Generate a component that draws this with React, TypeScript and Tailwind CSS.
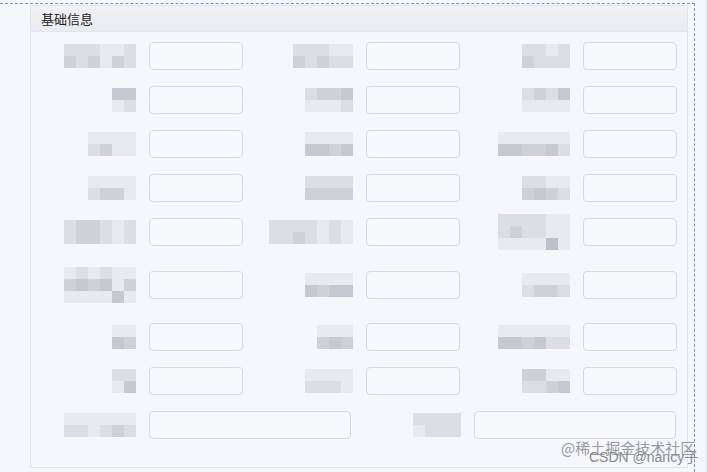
import React from "react";

// blurred label placeholders: each cell is a 12px mosaic tile
const shades = ["#e8eaf0", "#dcdee5", "#cfd1d9", "#c6c9d2", "#bcbfca", "#e4e6ec"];

type Label = { top: number[]; bottom: number[]; extra?: number[] };

function Tiles({ cells }: { cells: number[] }) {
  return (
    <div className="flex">
      {cells.map((s, i) => (
        <div key={i} className="h-[12px] w-[12px]" style={{ background: shades[s] }} />
      ))}
    </div>
  );
}

function Mosaic({ label }: { label: Label }) {
  return (
    <div className="flex flex-col items-end blur-[0.6px]">
      <Tiles cells={label.top} />
      <Tiles cells={label.bottom} />
      {label.extra && <Tiles cells={label.extra} />}
    </div>
  );
}

const L = (top: number[], bottom: number[], extra?: number[]): Label => ({ top, bottom, extra });

type Field = { label: Label; wide?: boolean };

const rows: { h: number; fields: Field[] }[] = [
  { h: 28, fields: [{ label: L([1, 1, 1, 0, 0, 1], [2, 1, 2, 0, 2, 1]) }, { label: L([1, 1, 1, 0, 0], [2, 1, 2, 1, 1]) }, { label: L([1, 1, 0, 1], [2, 1, 1, 1]) }] },
  { h: 28, fields: [{ label: L([3, 3], [0, 1]) }, { label: L([1, 2, 2, 3], [0, 0, 0, 1]) }, { label: L([1, 2, 1, 3], [0, 0, 0, 0]) }] },
  { h: 28, fields: [{ label: L([0, 0, 0, 0], [1, 2, 0, 0]) }, { label: L([0, 0, 0, 0], [3, 3, 2, 3]) }, { label: L([0, 0, 0, 0, 0, 0], [3, 3, 2, 2, 3, 1]) }] },
  { h: 28, fields: [{ label: L([0, 0, 0, 0], [1, 2, 2, 0]) }, { label: L([1, 1, 1, 1], [2, 2, 2, 2]) }, { label: L([1, 1, 0, 0], [2, 3, 2, 1]) }] },
  { h: 28, fields: [{ label: L([1, 2, 2, 1, 0, 1], [1, 2, 2, 1, 0, 1]) }, { label: L([1, 1, 1, 1, 0, 1, 0], [1, 1, 2, 1, 0, 1, 0]) }, { label: L([1, 1, 1, 1, 0, 0], [1, 2, 1, 1, 0, 0], [0, 0, 0, 0, 4, 0]) }] },
  { h: 45, fields: [{ label: L([0, 1, 0, 1, 0, 0], [2, 3, 2, 3, 0, 2], [0, 0, 0, 0, 3, 0]) }, { label: L([0, 0, 0, 0], [3, 2, 3, 3]) }, { label: L([0, 0, 0, 0], [1, 2, 2, 1]) }] },
  { h: 28, fields: [{ label: L([0, 0], [3, 2]) }, { label: L([0, 0, 0], [2, 3, 2]) }, { label: L([0, 0, 0, 0, 0, 0], [3, 3, 2, 3, 1, 1]) }] },
  { h: 28, fields: [{ label: L([1, 1], [0, 3]) }, { label: L([0, 0, 0, 0], [1, 1, 1, 0]) }, { label: L([2, 2, 0, 0], [1, 1, 2, 3]) }] },
  { h: 28, fields: [{ label: L([0, 0, 0, 0, 0, 0], [1, 1, 0, 1, 2, 1]), wide: true }, { label: L([1, 1, 1, 1], [0, 1, 1, 1]), wide: true }] },
];

function FieldItem({ field, h }: { field: Field; h: number }) {
  return (
    <div className={`flex items-center ${field.wide ? "w-[313px]" : "w-[205px]"}`} style={{ height: h }}>
      <div className="flex w-[111px] shrink-0 justify-end pr-[13px]">
        <Mosaic label={field.label} />
      </div>
      <div className="h-[28px] flex-1 rounded-[4px] border border-[#d6d9e0] bg-[#f7f9fd]" />
    </div>
  );
}

export default function App() {
  return (
    <div className="relative h-[472px] w-[707px] overflow-hidden bg-[#f4f7fc] font-['Noto_Sans_CJK_SC',sans-serif]">
      <div className="flex h-full">
        <div className="mt-[3px] flex h-[469px] w-[695px] border-r border-t border-dashed border-r-[#7d90c2] border-t-[#7d90c2]">
          <div className="ml-[30px] mt-[1px] flex h-[463px] w-[658px] flex-col border border-[#e1e4ea] bg-[#f5f7fc]">
            <div className="flex h-[25px] items-center bg-gradient-to-b from-[#f0f2f6] to-[#e9ebf0] pl-[10px] text-[13px] text-[#222]">
              基础信息
            </div>
            <div className="border-t border-[#e4e6ec]" />
            <div className="flex flex-col gap-[16px] pl-[7px] pt-[10px]">
              {rows.map((r, i) => (
                <div key={i} className="flex gap-[12px]">
                  {r.fields.map((f, j) => (
                    <FieldItem key={j} field={f} h={r.h} />
                  ))}
                </div>
              ))}
            </div>
          </div>
        </div>
        <div className="flex-1 border-r border-[#e3e6ec]" />
      </div>
      <div className="absolute left-[561px] top-[439px] text-[15px] leading-[18px] text-[#9a9a9a]">@稀土掘金技术社区</div>
      <div className="absolute left-[589px] top-[449px] text-[14px] leading-[16px] text-[#8a8a8a] font-['Liberation_Sans','Noto_Sans_CJK_SC',sans-serif]">
        CSDN @nancy子
      </div>
    </div>
  );
}
